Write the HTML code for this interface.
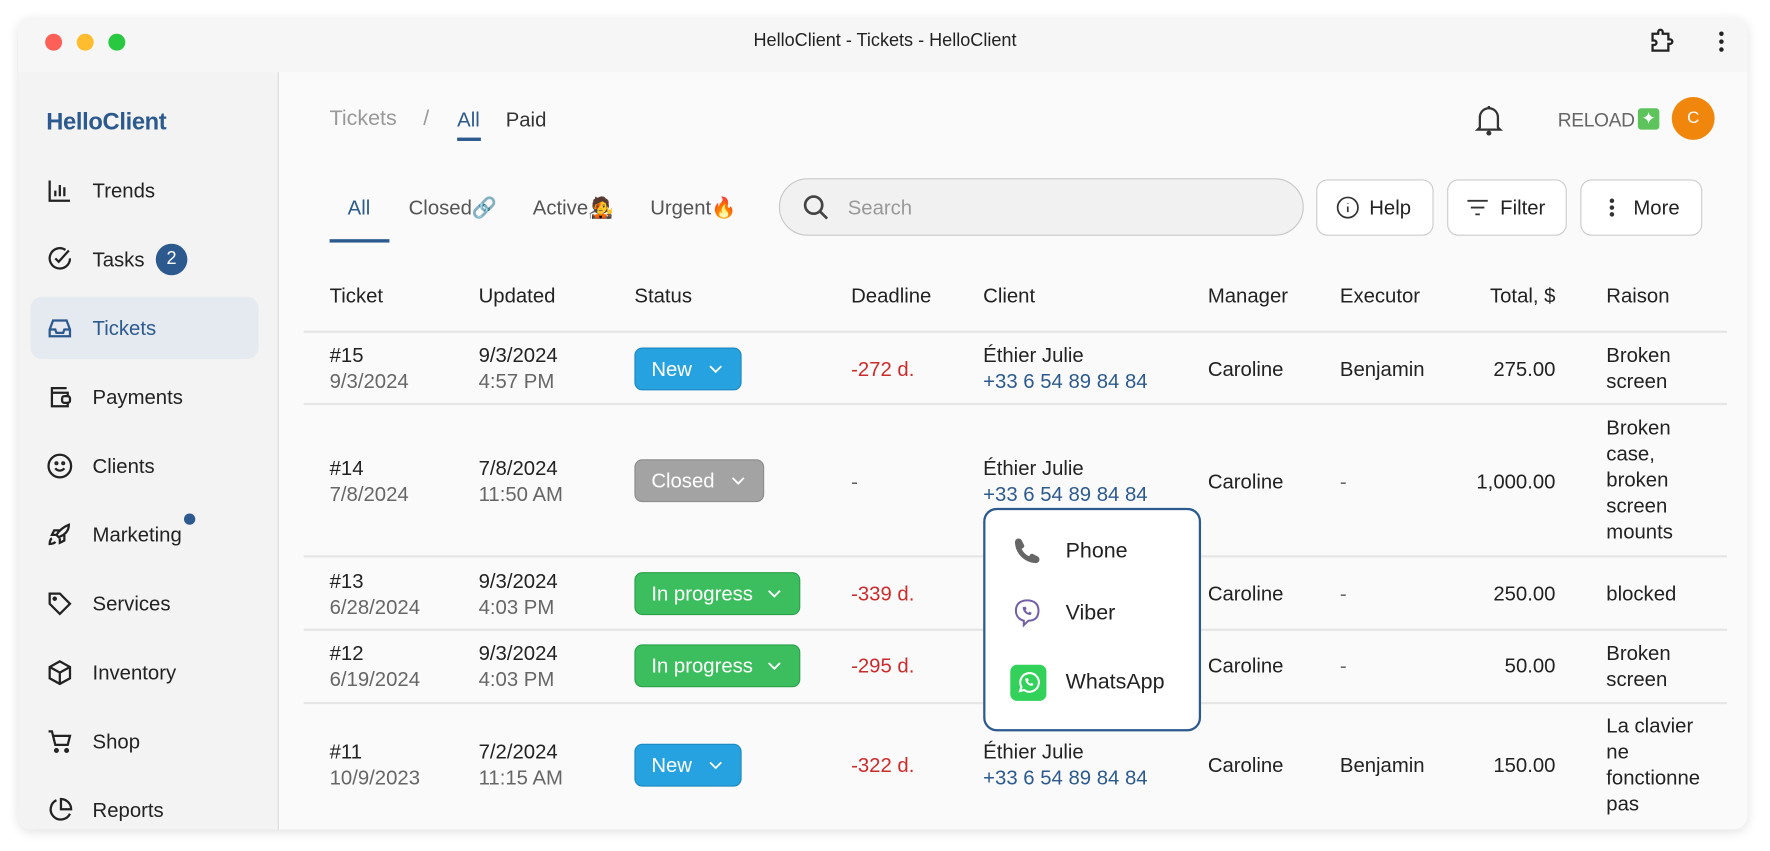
<!DOCTYPE html>
<html><head><meta charset="utf-8"><style>
*{box-sizing:border-box;margin:0;padding:0}
body{width:1770px;height:850px;overflow:hidden;background:#fff;font-family:"Liberation Sans","Noto Sans CJK JP",sans-serif;color:#222}
#s{position:absolute;left:0;top:1px;width:1568px;height:753px;transform:scale(1.1288);transform-origin:0 0}
.a{position:absolute;white-space:nowrap}
.win{position:absolute;left:16px;top:15px;width:1532px;height:719px;border-radius:12px;background:#fafafa;overflow:hidden;box-shadow:0 2px 10px rgba(0,0,0,.12)}
.tb{position:absolute;left:0;top:0;width:100%;height:48px;background:#f6f6f6}
.side{position:absolute;left:0;top:48px;width:231px;height:680px;background:#f3f3f3;border-right:1px solid #dcdcdc}
.nav{font-size:18px;color:#222}
.ic{position:absolute;width:24px;height:24px}
.th{font-size:18px;color:#222}
.td{font-size:18px;color:#222;line-height:23px}
.g{color:#666}
.red{color:#cc2b2b}
.blu{color:#2d5a8e}
.ln{position:absolute;left:269px;width:1261px;height:2px;background:#e6e6e6}
.pill{position:absolute;height:38px;border-radius:7px;color:#fff;font-size:18px;line-height:36px;padding-left:14px}
.pill svg{position:absolute;right:16px;top:14px}
.btn{position:absolute;top:158px;height:50px;border:1px solid #ccc;border-radius:10px;background:#fff;font-size:18px;line-height:48px}
</style></head><body><div id="s">
<div class="win">
 <div class="tb"></div>
 <div class="side"></div>
</div>
<div class="a" style="left:40px;top:29px;width:15px;height:15px;border-radius:50%;background:#fe5f57"></div>
<div class="a" style="left:68px;top:29px;width:15px;height:15px;border-radius:50%;background:#febc2e"></div>
<div class="a" style="left:96px;top:29px;width:15px;height:15px;border-radius:50%;background:#28c840"></div>
<div class="a" style="left:0;width:1568px;text-align:center;top:27px;font-size:16px;color:#222">HelloClient - Tickets - HelloClient</div>
<svg class="a" style="left:1460px;top:24px" width="24" height="24" viewBox="0 0 24 24" fill="none" stroke="#222" stroke-width="2"><path d="M4 5h5V3.5a2 2 0 0 1 4 0V5h5v5h1.5a2 2 0 0 1 0 4H18v6H4v-5h1.5a2 2 0 0 0 0-4H4z"/></svg>
<div class="a" style="left:1523px;top:27px;width:4px;height:4px;border-radius:50%;background:#222;box-shadow:0 7px 0 #222,0 14px 0 #222"></div>

<div class="a" style="left:41px;top:96px;font-size:21px;font-weight:bold;color:#2d5a8e;letter-spacing:-.3px">HelloClient</div>
<div class="a" style="left:27px;top:262px;width:202px;height:55px;border-radius:10px;background:#e5e9f0"></div>
<svg class="ic" style="left:41px;top:156px" viewBox="0 0 24 24" fill="none" stroke="#222" stroke-width="2"><path d="M3 3v18h18M8 17v-5M12 17V7M16 17v-8"/></svg>
<div class="a nav" style="left:82px;top:158px">Trends</div>
<svg class="ic" style="left:41px;top:217px" viewBox="0 0 24 24" fill="none" stroke="#222" stroke-width="2"><path d="M21 11a9 9 0 1 1-4-7.5"/><path d="M8 11l3 3 9-10"/></svg>
<div class="a nav" style="left:82px;top:219px">Tasks</div>
<div class="a" style="left:138px;top:215px;width:28px;height:28px;border-radius:50%;background:#2d5a8e;color:#fff;font-size:16px;text-align:center;line-height:28px">2</div>
<svg class="ic" style="left:41px;top:278px" viewBox="0 0 24 24" fill="none" stroke="#2d5a8e" stroke-width="2"><path d="M3 13l3-8h12l3 8v6H3z"/><path d="M3 13h5l1 3h6l1-3h5"/></svg>
<div class="a nav blu" style="left:82px;top:280px">Tickets</div>
<svg class="ic" style="left:41px;top:339px" viewBox="0 0 24 24" fill="none" stroke="#222" stroke-width="2"><path d="M18 4H5v16h14v-4M4 8h15v4"/><rect x="14" y="11" width="7" height="6" rx="2"/></svg>
<div class="a nav" style="left:82px;top:341px">Payments</div>
<svg class="ic" style="left:41px;top:400px" viewBox="0 0 24 24" fill="none" stroke="#222" stroke-width="2"><circle cx="12" cy="12" r="10"/><path d="M8 14s1.5 2 4 2 4-2 4-2"/><circle cx="9" cy="9.5" r=".8"/><circle cx="15" cy="9.5" r=".8"/></svg>
<div class="a nav" style="left:82px;top:402px">Clients</div>
<svg class="ic" style="left:41px;top:461px" viewBox="0 0 24 24" fill="none" stroke="#222" stroke-width="2"><path d="M5 15c-2 1-2 5-2 5s4 0 5-2M9 12a22 22 0 0 1 11-9c0 3-1 8-9 11zM9 12H5l2-4h5M12 15v4l4-2v-5"/></svg>
<div class="a nav" style="left:82px;top:463px">Marketing</div>
<div class="a" style="left:163px;top:454px;width:10px;height:10px;border-radius:50%;background:#2d5a8e"></div>
<svg class="ic" style="left:41px;top:522px" viewBox="0 0 24 24" fill="none" stroke="#222" stroke-width="2"><path d="M3 3h9l9 9-9 9-9-9z"/><circle cx="7.5" cy="7.5" r="1"/></svg>
<div class="a nav" style="left:82px;top:524px">Services</div>
<svg class="ic" style="left:41px;top:583px" viewBox="0 0 24 24" fill="none" stroke="#222" stroke-width="2"><path d="M12 2l9 5v10l-9 5-9-5V7z"/><path d="M3 7l9 5 9-5M12 12v10"/></svg>
<div class="a nav" style="left:82px;top:585px">Inventory</div>
<svg class="ic" style="left:41px;top:644px" viewBox="0 0 24 24" fill="none" stroke="#222" stroke-width="2"><path d="M2 3h3l3 12h11l2-8H6"/><circle cx="9" cy="20" r="1.2"/><circle cx="18" cy="20" r="1.2"/></svg>
<div class="a nav" style="left:82px;top:646px">Shop</div>
<svg class="ic" style="left:41px;top:705px" viewBox="0 0 24 24" fill="none" stroke="#222" stroke-width="2"><path d="M21 15a9 9 0 1 1-12-12"/><path d="M13 2a9 9 0 0 1 9 9h-9z"/></svg>
<div class="a nav" style="left:82px;top:707px">Reports</div>

<div class="a" style="left:292px;top:94px;font-size:19px;color:#999">Tickets</div>
<div class="a" style="left:375px;top:94px;font-size:19px;color:#999">/</div>
<div class="a" style="left:405px;top:95px;font-size:18px;color:#2d5a8e">All</div>
<div class="a" style="left:405px;top:121px;width:21px;height:3px;background:#2d5a8e"></div>
<div class="a" style="left:448px;top:95px;font-size:18px;color:#333">Paid</div>
<svg class="a" style="left:1306px;top:90px" width="26" height="30" viewBox="0 0 26 30" fill="none" stroke="#333" stroke-width="2"><path d="M5 22V13a8 8 0 0 1 16 0v9l2 2H3z"/><path d="M13 3v2"/><circle cx="13" cy="27" r="1.2" fill="#333"/></svg>
<div class="a" style="left:1380px;top:96px;font-size:17px;color:#666;letter-spacing:-.3px">RELOAD</div>
<div class="a" style="left:1451px;top:95px;width:19px;height:19px;border-radius:3px;background:#5cc45a;color:#fff;font-size:15px;text-align:center;line-height:19px">✦</div>
<div class="a" style="left:1481px;top:85px;width:38px;height:38px;border-radius:50%;background:#f0860c;color:#fff;font-size:15px;text-align:center;line-height:38px">C</div>

<div class="a" style="left:308px;top:173px;font-size:18px;color:#2d5a8e">All</div>
<div class="a" style="left:292px;top:211px;width:53px;height:3px;background:#2d5a8e"></div>
<div class="a" style="left:362px;top:173px;font-size:18px;color:#555">Closed🔗</div>
<div class="a" style="left:472px;top:173px;font-size:18px;color:#555">Active🧑‍🎤</div>
<div class="a" style="left:576px;top:173px;font-size:18px;color:#555">Urgent🔥</div>
<div class="a" style="left:690px;top:157px;width:465px;height:51px;border-radius:26px;background:#f1f1f1;border:1px solid #c8c8c8"></div>
<svg class="a" style="left:710px;top:170px" width="26" height="26" viewBox="0 0 24 24" fill="none" stroke="#444" stroke-width="2.2"><circle cx="10" cy="10" r="7"/><path d="M15 15l6 6"/></svg>
<div class="a" style="left:751px;top:173px;font-size:18px;color:#999">Search</div>
<div class="btn" style="left:1166px;width:104px"><svg class="a" style="left:17px;top:14px" width="20" height="20" viewBox="0 0 20 20" fill="none" stroke="#333" stroke-width="1.5"><circle cx="10" cy="10" r="9"/><path d="M10 9v5M10 6v.5"/></svg><span class="a" style="left:46px">Help</span></div>
<div class="btn" style="left:1282px;width:106px"><svg class="a" style="left:16px;top:15px" width="20" height="18" viewBox="0 0 20 18" fill="none" stroke="#333" stroke-width="1.6"><path d="M1 3h18M4 9h12M8 15h4"/></svg><span class="a" style="left:46px">Filter</span></div>
<div class="btn" style="left:1400px;width:108px"><div class="a" style="left:25px;top:16px;width:4px;height:4px;border-radius:50%;background:#333;box-shadow:0 6px 0 #333,0 12px 0 #333"></div><span class="a" style="left:46px">More</span></div>

<div class="a th" style="left:292px;top:251px">Ticket</div>
<div class="a th" style="left:424px;top:251px">Updated</div>
<div class="a th" style="left:562px;top:251px">Status</div>
<div class="a th" style="left:754px;top:251px">Deadline</div>
<div class="a th" style="left:871px;top:251px">Client</div>
<div class="a th" style="left:1070px;top:251px">Manager</div>
<div class="a th" style="left:1187px;top:251px">Executor</div>
<div class="a th" style="left:1278px;top:251px;width:100px;text-align:right">Total, $</div>
<div class="a th" style="left:1423px;top:251px">Raison</div>
<div class="ln" style="top:292px"></div>
<div class="ln" style="top:356px"></div>
<div class="ln" style="top:491px"></div>
<div class="ln" style="top:556px"></div>
<div class="ln" style="top:621px"></div>

<!-- row1 -->
<div class="a td" style="left:292px;top:303px">#15<br><span class="g">9/3/2024</span></div>
<div class="a td" style="left:424px;top:303px">9/3/2024<br><span class="g">4:57 PM</span></div>
<div class="pill" style="left:562px;top:307px;width:95px;background:#27a2e0;border:1px solid #1d86c0">New<svg width="12" height="8" viewBox="0 0 12 8" fill="none" stroke="#fff" stroke-width="1.6"><path d="M1 1.5l5 5 5-5"/></svg></div>
<div class="a td red" style="left:754px;top:315px">-272 d.</div>
<div class="a td" style="left:871px;top:303px">Éthier Julie<br><span class="blu">+33 6 54 89 84 84</span></div>
<div class="a td" style="left:1070px;top:315px">Caroline</div>
<div class="a td" style="left:1187px;top:315px">Benjamin</div>
<div class="a td" style="left:1278px;top:315px;width:100px;text-align:right">275.00</div>
<div class="a td" style="left:1423px;top:303px">Broken<br>screen</div>
<!-- row2 -->
<div class="a td" style="left:292px;top:403px">#14<br><span class="g">7/8/2024</span></div>
<div class="a td" style="left:424px;top:403px">7/8/2024<br><span class="g">11:50 AM</span></div>
<div class="pill" style="left:562px;top:406px;width:115px;background:#a3a3a3;border:1px solid #8c8c8c">Closed<svg width="12" height="8" viewBox="0 0 12 8" fill="none" stroke="#fff" stroke-width="1.6"><path d="M1 1.5l5 5 5-5"/></svg></div>
<div class="a td g" style="left:754px;top:415px">-</div>
<div class="a td" style="left:871px;top:403px">Éthier Julie<br><span class="blu">+33 6 54 89 84 84</span></div>
<div class="a td" style="left:1070px;top:415px">Caroline</div>
<div class="a td g" style="left:1187px;top:415px">-</div>
<div class="a td" style="left:1278px;top:415px;width:100px;text-align:right">1,000.00</div>
<div class="a td" style="left:1423px;top:367px">Broken<br>case,<br>broken<br>screen<br>mounts</div>
<!-- row3 -->
<div class="a td" style="left:292px;top:503px">#13<br><span class="g">6/28/2024</span></div>
<div class="a td" style="left:424px;top:503px">9/3/2024<br><span class="g">4:03 PM</span></div>
<div class="pill" style="left:562px;top:506px;width:147px;background:#3dbe5e;border:1px solid #2aa04a">In progress<svg width="12" height="8" viewBox="0 0 12 8" fill="none" stroke="#fff" stroke-width="1.6"><path d="M1 1.5l5 5 5-5"/></svg></div>
<div class="a td red" style="left:754px;top:514px">-339 d.</div>
<div class="a td" style="left:1070px;top:514px">Caroline</div>
<div class="a td g" style="left:1187px;top:514px">-</div>
<div class="a td" style="left:1278px;top:514px;width:100px;text-align:right">250.00</div>
<div class="a td" style="left:1423px;top:514px">blocked</div>
<!-- row4 -->
<div class="a td" style="left:292px;top:567px">#12<br><span class="g">6/19/2024</span></div>
<div class="a td" style="left:424px;top:567px">9/3/2024<br><span class="g">4:03 PM</span></div>
<div class="pill" style="left:562px;top:570px;width:147px;background:#3dbe5e;border:1px solid #2aa04a">In progress<svg width="12" height="8" viewBox="0 0 12 8" fill="none" stroke="#fff" stroke-width="1.6"><path d="M1 1.5l5 5 5-5"/></svg></div>
<div class="a td red" style="left:754px;top:578px">-295 d.</div>
<div class="a td" style="left:1070px;top:578px">Caroline</div>
<div class="a td g" style="left:1187px;top:578px">-</div>
<div class="a td" style="left:1278px;top:578px;width:100px;text-align:right">50.00</div>
<div class="a td" style="left:1423px;top:567px">Broken<br>screen</div>
<!-- row5 -->
<div class="a td" style="left:292px;top:654px">#11<br><span class="g">10/9/2023</span></div>
<div class="a td" style="left:424px;top:654px">7/2/2024<br><span class="g">11:15 AM</span></div>
<div class="pill" style="left:562px;top:658px;width:95px;background:#27a2e0;border:1px solid #1d86c0">New<svg width="12" height="8" viewBox="0 0 12 8" fill="none" stroke="#fff" stroke-width="1.6"><path d="M1 1.5l5 5 5-5"/></svg></div>
<div class="a td red" style="left:754px;top:666px">-322 d.</div>
<div class="a td" style="left:871px;top:654px">Éthier Julie<br><span class="blu">+33 6 54 89 84 84</span></div>
<div class="a td" style="left:1070px;top:666px">Caroline</div>
<div class="a td" style="left:1187px;top:666px">Benjamin</div>
<div class="a td" style="left:1278px;top:666px;width:100px;text-align:right">150.00</div>
<div class="a td" style="left:1423px;top:631px">La clavier<br>ne<br>fonctionne<br>pas</div>

<!-- popup -->
<div class="a" style="left:871px;top:449px;width:193px;height:198px;border:2px solid #2d5a8e;border-radius:12px;background:#fff"></div>
<svg class="a" style="left:897px;top:474px" width="26" height="26" viewBox="0 0 24 24"><path d="M5 2c1 0 2 .5 2.5 1.5l2 4c.3.8 0 1.6-.6 2L7.5 10.5c1 2.5 3.5 5 6 6l1-1.4c.5-.6 1.3-.8 2-.5l4 2c1 .5 1.5 1.5 1.5 2.5 0 2-1.5 3-3 3C10 22 2 14 2 5c0-1.5 1-3 3-3z" fill="#666"/></svg>
<div class="a" style="left:944px;top:477px;font-size:19px">Phone</div>
<svg class="a" style="left:897px;top:529px" width="26" height="28" viewBox="0 0 26 28" fill="none" stroke="#7360a8" stroke-width="1.8"><path d="M13 2c6 0 10 3 10 9s-3 9-9 9l-4 4v-4c-4-1-7-4-7-9 0-6 4-9 10-9z"/><path d="M9 8c0 4 3 7 7 7l1-2-2-1-1 1c-1-.5-2-1.5-2.5-2.5l1-1-1-2z" fill="#7360a8" stroke="none"/></svg>
<div class="a" style="left:944px;top:532px;font-size:19px">Viber</div>
<div class="a" style="left:895px;top:588px;width:32px;height:32px;border-radius:6px;background:#31d15a"></div>
<svg class="a" style="left:900px;top:593px" width="22" height="22" viewBox="0 0 24 24" fill="none" stroke="#fff" stroke-width="2"><path d="M4 20l1.3-4A9 9 0 1 1 8 19z"/><path d="M9 8c0 4 3 7 7 7l1-2-2-1-1 1c-1-.5-2-1.5-2.5-2.5l1-1-1-2z" fill="#fff" stroke="none"/></svg>
<div class="a" style="left:944px;top:593px;font-size:19px">WhatsApp</div>
</div></body></html>
